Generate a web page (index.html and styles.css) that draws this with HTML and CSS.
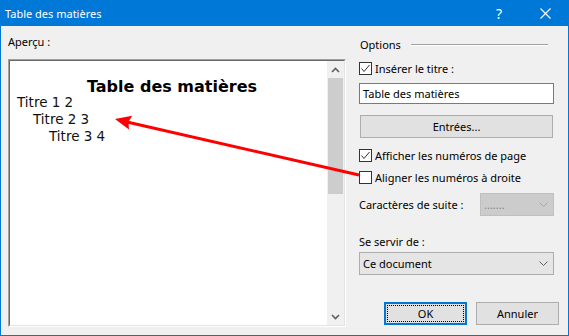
FILE: index.html
```html
<!DOCTYPE html>
<html lang="fr">
<head>
    <meta charset="UTF-8">
    <title>Table des matières</title>
    <link rel="stylesheet" href="styles.css">
</head>
<body>
    <div class="window">
        <div class="titlebar">
            <span class="title">Table des matières</span>
            <span class="caption-btn help">?</span>
            <span class="caption-btn close">
                <svg width="11" height="11" viewBox="0 0 11 11"><path d="M0.5 0.5 L10.5 10.5 M10.5 0.5 L0.5 10.5" stroke="#fff" stroke-width="1.1"/></svg>
            </span>
        </div>

        <div class="dialog-body">
            <!-- preview column -->
            <div class="preview-col">
                <div class="label">Aperçu :</div>
                <div class="preview">
                    <div class="preview-inner">
                        <div class="preview-page">
                            <div class="toc-heading">Table des matières</div>
                            <div class="toc-line lvl1">Titre 1 2</div>
                            <div class="toc-line lvl2">Titre 2 3</div>
                            <div class="toc-line lvl3">Titre 3 4</div>
                        </div>
                        <div class="scrollbar">
                            <div class="sb-btn">
                                <svg width="9" height="6" viewBox="0 0 9 6"><polyline points="1,5 4.5,1.5 8,5" fill="none" stroke="#606060" stroke-width="1.6"/></svg>
                            </div>
                            <div class="sb-thumb"></div>
                            <div class="sb-track"></div>
                            <div class="sb-btn">
                                <svg width="9" height="6" viewBox="0 0 9 6"><polyline points="1,1 4.5,4.5 8,1" fill="none" stroke="#606060" stroke-width="1.6"/></svg>
                            </div>
                        </div>
                    </div>
                </div>
            </div>

            <!-- options column -->
            <div class="options-col">
                <div class="group-head">
                    <span>Options</span>
                    <span class="etched"></span>
                </div>

                <div class="check first">
                    <span class="box"><svg width="11" height="11" viewBox="0 0 11 11"><polyline points="1.5,5.5 4,8.5 9.5,2" fill="none" stroke="#333" stroke-width="1"/></svg></span>
                    <span>Insérer le titre :</span>
                </div>

                <div class="textbox">Table des matières</div>

                <div class="button wide">Entrées...</div>

                <div class="check show-num">
                    <span class="box"><svg width="11" height="11" viewBox="0 0 11 11"><polyline points="1.5,5.5 4,8.5 9.5,2" fill="none" stroke="#333" stroke-width="1"/></svg></span>
                    <span>Afficher les numéros de page</span>
                </div>

                <div class="check align-num">
                    <span class="box"></span>
                    <span>Aligner les numéros à droite</span>
                </div>

                <div class="suite-row">
                    <span>Caractères de suite :</span>
                    <div class="combo disabled">
                        <span>.......</span>
                        <svg width="9" height="5" viewBox="0 0 9 5"><polyline points="0.5,0.5 4.5,4.5 8.5,0.5" fill="none" stroke="#a8a8a8" stroke-width="1"/></svg>
                    </div>
                </div>

                <div class="label use-label">Se servir de :</div>
                <div class="combo doc">
                    <span>Ce document</span>
                    <svg width="9" height="5" viewBox="0 0 9 5"><polyline points="0.5,0.5 4.5,4.5 8.5,0.5" fill="none" stroke="#606060" stroke-width="1"/></svg>
                </div>

                <div class="actions">
                    <div class="button default">OK</div>
                    <div class="button">Annuler</div>
                </div>
            </div>
        </div>

        <!-- red annotation arrow drawn over the dialog -->
        <svg class="arrow" width="569" height="336" viewBox="0 0 569 336">
            <line x1="127" y1="122" x2="359" y2="175" stroke="#ff0000" stroke-width="3"/>
            <polygon points="115,119 132.2,115.8 128.4,122 129,129.4" fill="#ff0000"/>
        </svg>
    </div>
</body>
</html>
```

FILE: styles.css
```css
* {
    box-sizing: border-box;
}
body {
    margin: 0;
    font-family: "Noto Sans", sans-serif;
    font-size: 11px;
    color: #000;
}
.window {
    position: relative;
    width: 569px;
    height: 336px;
    background-color: #f0f0f0;
    border: 1px solid #0078d7;
    border-top: none;
    display: flex;
    flex-direction: column;
}
.titlebar {
    height: 26px;
    background-color: #0078d7;
    color: #fff;
    display: flex;
    align-items: center;
    padding-left: 4px;
}
.title {
    flex-grow: 1;
}
.caption-btn {
    width: 46px;
    height: 26px;
    display: flex;
    align-items: center;
    justify-content: center;
}
.help {
    font-size: 14px;
}
.close {
    padding-top: 1px;
}

.dialog-body {
    flex-grow: 1;
    display: flex;
    padding: 0 9px 0 7px;
}
.label {
    line-height: 16px;
    height: 16px;
}
.preview-col {
    width: 338px;
    margin-right: 13px;
}
.preview-col .label {
    margin-top: 8px;
}
.preview {
    margin-top: 9px;
    height: 268px;
    display: flex;
    border: 1px solid;
    border-color: #a0a0a0 #fff #fff #a0a0a0;
}
.preview-inner {
    flex-grow: 1;
    display: flex;
    border: 1px solid;
    border-color: #696969 #e3e3e3 #e3e3e3 #696969;
}
.preview-page {
    flex-grow: 1;
    background-color: #fff;
    padding-top: 16px;
    padding-left: 7px;
    font-family: "DejaVu Sans", Verdana, sans-serif;
    font-size: 13.5px;
    line-height: 17px;
    color: #111;
}
.toc-heading {
    font-size: 16px;
    font-weight: bold;
    text-align: center;
    color: #000;
    padding-top: 1px;
    margin-bottom: -1px;
}
.lvl2 {
    padding-left: 16px;
}
.lvl3 {
    padding-left: 32px;
}
.scrollbar {
    width: 17px;
    background-color: #f0f0f0;
    display: flex;
    flex-direction: column;
}
.sb-btn {
    height: 17px;
    display: flex;
    align-items: center;
    justify-content: center;
}
.sb-thumb {
    height: 116px;
    margin: 0 1px;
    background-color: #cdcdcd;
}
.sb-track {
    flex-grow: 1;
}

.options-col {
    width: 200px;
    display: flex;
    flex-direction: column;
}
.options-col > .check,
.options-col > .textbox,
.options-col > .suite-row,
.options-col > .combo,
.options-col > .group-head {
    width: 195px;
}
.group-head {
    margin-top: 10px;
    height: 16px;
    display: flex;
    align-items: center;
    padding-left: 1px;
}
.etched {
    flex-grow: 1;
    height: 2px;
    margin-left: 10px;
    margin-right: 6px;
    margin-top: 1px;
    border-top: 1px solid #a0a0a0;
    border-bottom: 1px solid #fff;
}
.check {
    height: 13px;
    display: flex;
    align-items: center;
    line-height: 13px;
}
.check .box {
    width: 13px;
    height: 13px;
    border: 1px solid #333;
    background-color: #fff;
    margin-right: 3px;
    display: flex;
}
.check.first {
    margin-top: 10px;
}
.textbox {
    margin-top: 8px;
    height: 21px;
    border: 1px solid #7a7a7a;
    background-color: #fff;
    padding-left: 3px;
    line-height: 19px;
}
.button {
    height: 23px;
    border: 1px solid #adadad;
    background-color: #e1e1e1;
    display: flex;
    align-items: center;
    justify-content: center;
}
.button.wide {
    margin: 11px 0 0 1px;
    width: 193px;
}
.check.show-num {
    margin-top: 11px;
}
.check.align-num {
    margin-top: 9px;
}
.suite-row {
    margin-top: 9px;
    display: flex;
    align-items: center;
    justify-content: space-between;
}
.combo {
    height: 23px;
    border: 1px solid #adadad;
    background-color: #e5e5e5;
    display: flex;
    align-items: center;
    justify-content: space-between;
    padding: 0 5px 0 3px;
}
.combo.disabled {
    width: 74px;
    background-color: #cccccc;
    border-color: #bfbfbf;
    color: #838383;
}
.use-label {
    margin-top: 18px;
}
.combo.doc {
    margin-top: 2px;
}
.actions {
    margin-top: 27px;
    display: flex;
    justify-content: flex-end;
    gap: 9px;
}
.actions .button {
    width: 83px;
}
.button.default {
    border-color: #0078d7;
    box-shadow: inset 0 0 0 1px #0078d7;
    outline: 1px dotted #000;
    outline-offset: -4px;
}

.arrow {
    position: absolute;
    left: -1px;
    top: 0;
    pointer-events: none;
}
```
